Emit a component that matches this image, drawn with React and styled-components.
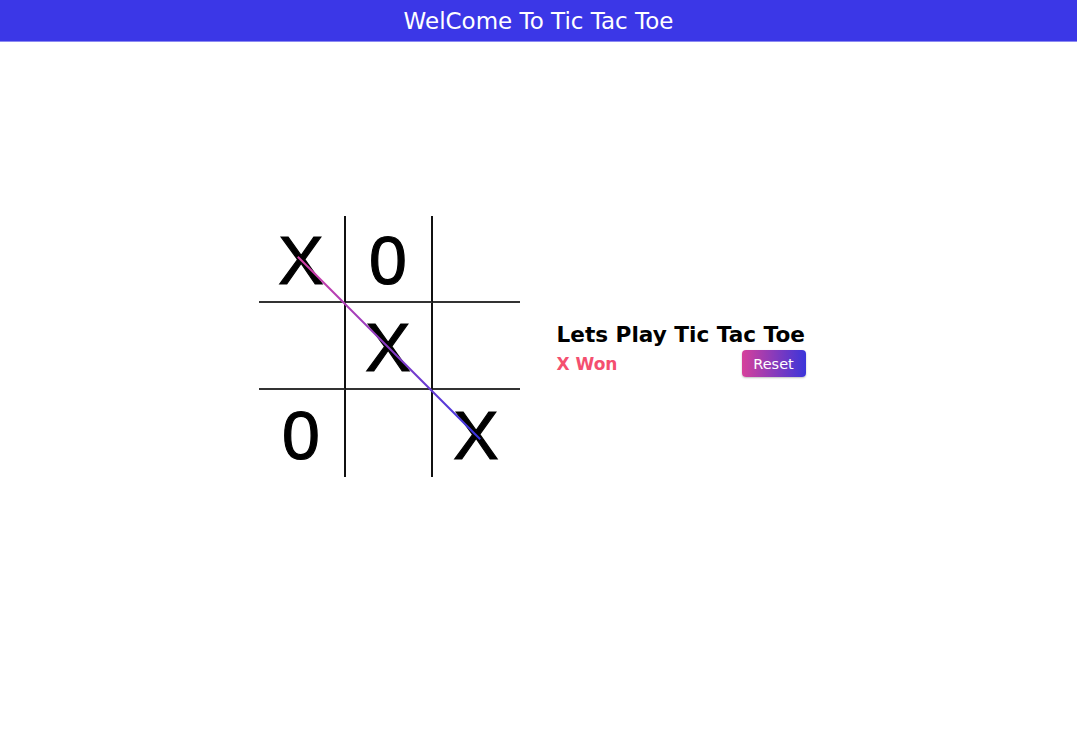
import React from "react";
import styled, { createGlobalStyle } from "styled-components";

const GlobalStyle = createGlobalStyle`
  body {
    margin: 0;
    background: #ffffff;
    font-family: "Comic Sans MS", "DejaVu Sans", "Noto Sans", sans-serif;
  }
`;

const Header = styled.header`
  height: 41px;
  background: #3b37e7;
  box-shadow: 0 1px 0 #8c8af2;
  color: #ffffff;
  display: flex;
  align-items: center;
  justify-content: center;
  font-size: 23px;
`;

const Main = styled.main`
  display: flex;
  justify-content: center;
  align-items: center;
  gap: 37px;
  padding-top: 175px;
`;

const Board = styled.div`
  position: relative;
  display: grid;
  grid-template-columns: repeat(3, 87px);
  grid-template-rows: repeat(3, 87px);
`;

const Cell = styled.div`
  display: flex;
  align-items: center;
  justify-content: center;
  box-sizing: border-box;
  border-right: ${(p) => (p.$col < 2 ? "2px solid #111" : "none")};
  border-bottom: ${(p) => (p.$row < 2 ? "2px solid #333" : "none")};
  font-family: "Liberation Sans", Arial, sans-serif;
  font-size: 68px;
  color: #000;
  line-height: 1;
  padding-top: 2px;
  -webkit-text-stroke: 1.2px #000;
`;

const WinLine = styled.div`
  position: absolute;
  left: 50%;
  top: 50%;
  width: 258px;
  height: 2px;
  margin-left: -129px;
  background: linear-gradient(90deg, #d63fa6, #3a36e2);
  transform: rotate(45deg);
  pointer-events: none;
`;

const Panel = styled.div`
  width: 249px;
  margin-right: 13px;
  display: flex;
  flex-direction: column;
  gap: 3px;
  padding-top: 6px;
`;

const Title = styled.h2`
  margin: 0;
  font-size: 21.6px;
  font-weight: 700;
  color: #000;
  white-space: nowrap;
`;

const StatusRow = styled.div`
  display: flex;
  align-items: center;
  justify-content: space-between;
`;

const Status = styled.span`
  color: #f44f6f;
  font-weight: 700;
  font-size: 17px;
`;

const ResetButton = styled.button`
  width: 64px;
  height: 27px;
  border: none;
  border-radius: 4px;
  background: linear-gradient(90deg, #d6409b, #3b35da);
  box-shadow: 0 1px 2px rgba(0, 0, 0, 0.25);
  color: #ffffff;
  font-family: inherit;
  font-size: 14.5px;
  cursor: pointer;
`;

const cells = ["X", "0", "", "", "X", "", "0", "", "X"];

export default function App() {
  return (
    <>
      <GlobalStyle />
      <Header>WelCome To Tic Tac Toe</Header>
      <Main>
        <Board>
          {cells.map((v, i) => (
            <Cell key={i} $row={Math.floor(i / 3)} $col={i % 3}>
              {v}
            </Cell>
          ))}
          <WinLine />
        </Board>
        <Panel>
          <Title>Lets Play Tic Tac Toe</Title>
          <StatusRow>
            <Status>X Won</Status>
            <ResetButton>Reset</ResetButton>
          </StatusRow>
        </Panel>
      </Main>
    </>
  );
}
